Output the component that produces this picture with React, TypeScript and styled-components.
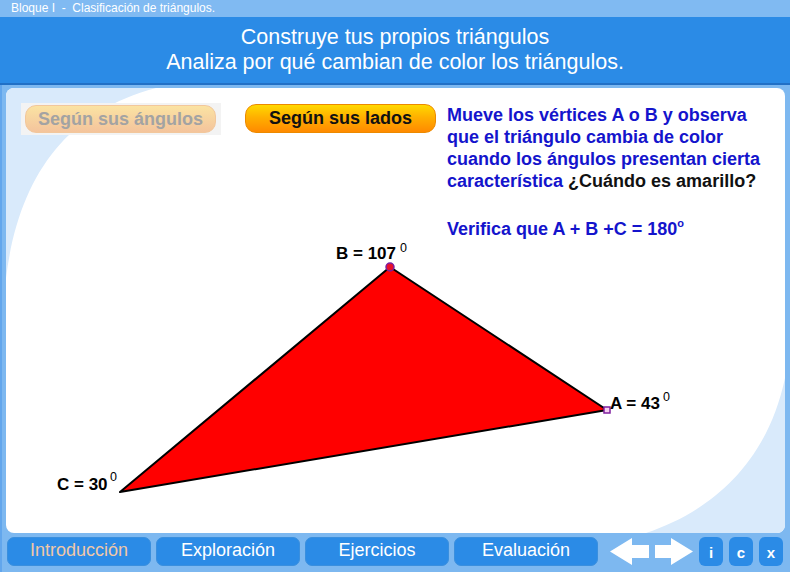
import React from "react";
import styled, { createGlobalStyle } from "styled-components";

const GlobalStyle = createGlobalStyle`
  html, body { margin: 0; padding: 0; }
  body {
    width: 790px;
    height: 572px;
    overflow: hidden;
    font-family: "Liberation Sans", Arial, sans-serif;
    background: #7db8f0;
  }
`;

const Frame = styled.div`
  width: 790px;
  height: 572px;
  display: flex;
  flex-direction: column;
  background: #7db8f0;
  box-shadow: inset 2px 0 0 #62a6ec;
`;

const TopBar = styled.div`
  height: 17px;
  line-height: 17px;
  padding-left: 11px;
  font-size: 12px;
  color: #ffffff;
  background: #80baf2;
  white-space: pre;
`;

const Header = styled.div`
  height: 66px;
  border-bottom: 2px solid #2170c6;
  background: #2b8be6;
  display: flex;
  flex-direction: column;
  align-items: center;
  justify-content: center;
  color: #ffffff;
  font-size: 21.5px;
  line-height: 25px;
`;

const HeaderLine = styled.div`
  white-space: nowrap;
`;

const Body = styled.div`
  flex: 1;
  display: flex;
  flex-direction: column;
  padding: 3px 5px 0 6px;
`;

const Panel = styled.div`
  position: relative;
  width: 779px;
  height: 445px;
  background: #ffffff;
  border-radius: 8px;
  overflow: hidden;
`;

const Canvas = styled.svg`
  position: absolute;
  left: 0;
  top: 0;
`;

const TopRow = styled.div`
  position: relative;
  display: flex;
  align-items: flex-start;
  padding: 15px 0 0 15px;
`;

const ModeSlot = styled.div`
  width: 200px;
  height: 32px;
  box-sizing: border-box;
  padding: 2px 5px 2px 4px;
  background: #f3f3f3;
`;

const ModeButton = styled.div<{ $active: boolean }>`
  box-sizing: border-box;
  width: 191px;
  height: ${(p) => (p.$active ? 29 : 28)}px;
  margin-left: ${(p) => (p.$active ? 24 : 0)}px;
  margin-top: ${(p) => (p.$active ? 1 : 0)}px;
  border-radius: 11px;
  display: flex;
  align-items: center;
  justify-content: center;
  font-weight: bold;
  font-size: 18px;
  color: ${(p) => (p.$active ? "#111111" : "#a3a3a3")};
  background: ${(p) =>
    p.$active
      ? "linear-gradient(#ffd900 0%, #ffb000 45%, #ff8a00 100%)"
      : "linear-gradient(#fbe3a2 0%, #f7d3a0 50%, #f4c49c 100%)"};
  border: 1px solid ${(p) => (p.$active ? "#ec8a00" : "#f2c79c")};
  white-space: nowrap;
`;

const Instructions = styled.div`
  margin-left: 11px;
  margin-top: 1px;
  font-weight: bold;
  font-size: 18px;
  line-height: 22px;
  color: #1414cc;
`;

const Para = styled.div<{ $gap?: number }>`
  margin-top: ${(p) => p.$gap ?? 0}px;
  white-space: nowrap;
`;

const Dark = styled.span`
  color: #111111;
`;

const Deg = styled.sup`
  font-size: 11px;
  vertical-align: 8px;
  line-height: 0;
`;

const Nav = styled.div`
  display: flex;
  align-items: center;
  height: 29px;
  margin-top: 4px;
  padding-left: 1px;
`;

const NavButton = styled.div<{ $current?: boolean }>`
  flex-shrink: 0;
  box-sizing: border-box;
  width: 144px;
  height: 29px;
  margin-right: 5px;
  border-radius: 7px;
  background: #2b8be6;
  border: 1px solid #3a8fde;
  display: flex;
  align-items: center;
  justify-content: center;
  font-size: 18px;
  padding-bottom: 3px;
  color: ${(p) => (p.$current ? "#f0c8a6" : "#ffffff")};
`;

const Arrows = styled.svg`
  flex-shrink: 0;
  margin-left: 7px;
  margin-right: 5px;
`;

const SmallButton = styled.div`
  flex-shrink: 0;
  box-sizing: border-box;
  width: 24px;
  height: 29px;
  margin-right: 6px;
  border-radius: 6px;
  background: #2b8be6;
  display: flex;
  align-items: center;
  justify-content: center;
  color: #ffffff;
  font-weight: bold;
  font-size: 15px;
  padding-top: 2px;
  &:last-child { margin-right: 0; }
`;

const Label = ({ x, y, text, sx, sy }: { x: number; y: number; text: string; sx: number; sy: number }) => (
  <g fontFamily='"Liberation Sans", Arial, sans-serif' fill="#000">
    <text x={x} y={y} fontSize={17} fontWeight="bold">
      {text}
    </text>
    <text x={sx} y={sy} fontSize={12.5}>
      0
    </text>
  </g>
);

export default function App() {
  return (
    <>
      <GlobalStyle />
      <Frame>
        <TopBar>{"Bloque I  -  Clasificación de triángulos."}</TopBar>
        <Header>
          <HeaderLine>Construye tus propios triángulos</HeaderLine>
          <HeaderLine>Analiza por qué cambian de color los triángulos.</HeaderLine>
        </Header>
        <Body>
          <Panel>
            <Canvas width={779} height={445} viewBox="0 0 779 445">
              <path d="M0,0 L150,0 C55,25 12,95 0,190 Z" fill="#d9eafb" />
              <path d="M779,290 L779,445 L640,445 C700,425 760,380 779,290 Z" fill="#d9eafb" />
              <polygon
                points="114,404 384,179 601,322"
                fill="#ff0000"
                stroke="#000"
                strokeWidth={2}
                strokeLinejoin="round"
              />
              <circle cx={384} cy={179} r={4} fill="#e8102a" stroke="#7a1fa0" strokeWidth={1.5} />
              <rect x={598} y={319} width={6} height={6} fill="#f6d0f0" stroke="#8020a0" strokeWidth={1.5} />
              <Label x={330} y={171} text="B = 107" sx={394} sy={164} />
              <Label x={604} y={321} text="A = 43" sx={657} sy={313} />
              <Label x={51} y={402} text="C = 30" sx={104} sy={393} />
            </Canvas>
            <TopRow>
              <ModeSlot>
                <ModeButton $active={false}>Según sus ángulos</ModeButton>
              </ModeSlot>
              <ModeButton $active>Según sus lados</ModeButton>
              <Instructions>
                <Para>Mueve los vértices A o B y observa</Para>
                <Para>que el triángulo cambia de color</Para>
                <Para>cuando los ángulos presentan cierta</Para>
                <Para>
                  característica <Dark>¿Cuándo es amarillo?</Dark>
                </Para>
                <Para $gap={26}>
                  Verifica que A + B +C = 180<Deg>o</Deg>
                </Para>
              </Instructions>
            </TopRow>
          </Panel>
          <Nav>
            <NavButton $current>Introducción</NavButton>
            <NavButton>Exploración</NavButton>
            <NavButton>Ejercicios</NavButton>
            <NavButton>Evaluación</NavButton>
            <Arrows width={84} height={29} viewBox="0 0 84 29">
              <polygon points="0,14.5 22,1 22,8 39,8 39,21 22,21 22,28" fill="#ffffff" />
              <polygon points="83,14.5 61,1 61,8 45,8 45,21 61,21 61,28" fill="#ffffff" />
            </Arrows>
            <SmallButton>i</SmallButton>
            <SmallButton>c</SmallButton>
            <SmallButton>x</SmallButton>
          </Nav>
        </Body>
      </Frame>
    </>
  );
}
